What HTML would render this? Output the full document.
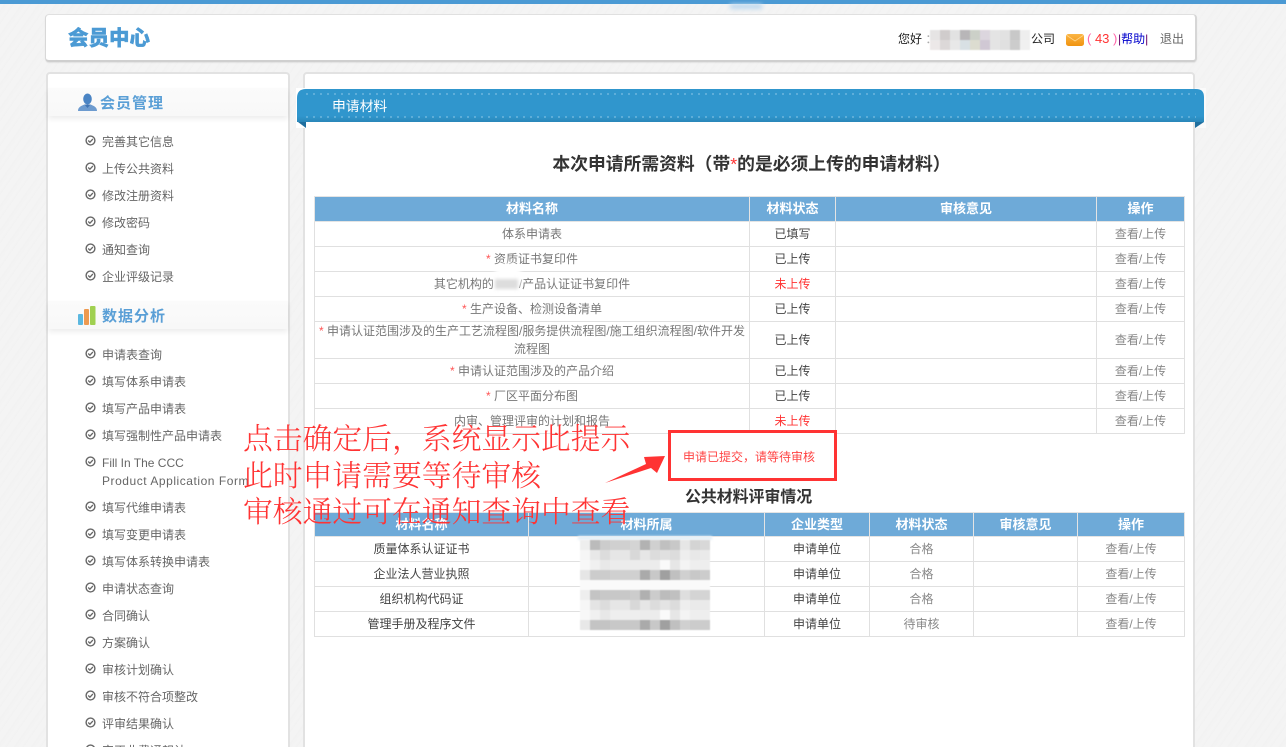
<!DOCTYPE html>
<html lang="zh-CN">
<head>
<meta charset="utf-8">
<title>会员中心</title>
<style>
html,body{margin:0;padding:0;width:1286px;height:747px;overflow:hidden}
body{position:relative;font:12px/18px "Liberation Sans","Noto Sans CJK SC",sans-serif;color:#666;
background:#f3f3f3 repeating-linear-gradient(125deg,#f4f4f4 0,#f4f4f4 5px,#f2f2f2 6px,#f4f4f4 11px,#f2f2f2 14px)}
div,span,svg,table{box-sizing:border-box}
.abs,.i,.ck{position:absolute}
.top{position:absolute;left:0;top:0;width:1286px;height:4px;background:#4b9ad4}
.panel{position:absolute;background:#fff;border:2px solid #e2e2e2;border-radius:4px}
.i{left:102px;white-space:nowrap;color:#666;line-height:18px}
.ck{left:85px;width:11px;height:11px}
.sh{position:absolute;left:48px;width:240px;height:28px;background:linear-gradient(#fbfbfb,#f8f8f8);box-shadow:0 3px 5px rgba(0,0,0,.07)}
.st{position:absolute;font-size:15px;line-height:20px;font-weight:700;color:#5a9fd6;letter-spacing:1px;white-space:nowrap}
table{position:absolute;left:314px;width:870px;border-collapse:collapse;table-layout:fixed;background:#fff}
td,th{border:1px solid #e0e0e0;padding:0;text-align:center;font-size:12px;line-height:18px;color:#777;font-weight:400}
th{background:#6eaad8;color:#fff;font-weight:700;font-size:13px;border-color:#e4e4e4;height:24px}
.t2 th{height:23px}
.t1 td{height:24px}
.s{color:#444}
.o{color:#888}
.r{color:#f33}
.g{color:#888}
.d{color:#444}
b.x{color:#f55;font-weight:400}
.note{position:absolute;left:243px;color:#f33;font-family:"Noto Serif CJK SC","Liberation Serif",serif;font-size:29.8px;line-height:36px;white-space:nowrap;font-weight:300}
</style>
</head>
<body>
<svg width="0" height="0" style="position:absolute"><defs><symbol id="c" viewBox="0 0 11 11"><circle cx="5.5" cy="5.5" r="4.4" fill="none" stroke="#666" stroke-width="1.4"/><path d="M3.2 5.5l1.7 1.700 3-3.200" fill="none" stroke="#666" stroke-width="1.300"/></symbol></defs></svg>
<div class="top"></div>
<div class="abs" style="left:730px;top:4px;width:32px;height:5px;background:#bcd8ee;filter:blur(2px)"></div>

<div class="panel" style="left:45px;top:14px;width:1152px;height:48px;border-width:1px 2px 2px 1px;border-color:#e0e0e0 #d6d6d6 #cfcfcf #d8d8d8;box-shadow:0 1px 1px rgba(0,0,0,.08)"></div>
<div class="abs" style="left:68px;top:25px;font-size:20.5px;line-height:28px;font-weight:900;color:#4b9ad4;white-space:nowrap;-webkit-text-stroke:.4px #4b9ad4">会员中心</div>

<div class="abs" style="left:898px;top:30px;color:#222;white-space:nowrap">您好 <span style="color:#aaa">：</span></div>
<svg class="abs" style="left:930px;top:30px;filter:blur(.4px)" width="100" height="20"><g>
<rect x="0" width="10" height="10" fill="#e6e4e4"/><rect x="10" width="10" height="10" fill="#d0cccc"/><rect x="20" width="10" height="10" fill="#e2e2e2"/><rect x="30" width="10" height="10" fill="#b8b6b8"/><rect x="40" width="10" height="10" fill="#ccd0c8"/><rect x="50" width="10" height="10" fill="#dcd6de"/><rect x="60" width="10" height="10" fill="#e4e4e4"/><rect x="70" width="10" height="10" fill="#e2e2e2"/><rect x="80" width="10" height="10" fill="#c8c8c8"/><rect x="90" width="10" height="10" fill="#eeeeee"/>
<rect x="0" y="10" width="10" height="10" fill="#ece8e8"/><rect x="10" y="10" width="10" height="10" fill="#dcd8d8"/><rect x="20" y="10" width="10" height="10" fill="#e8e8e8"/><rect x="30" y="10" width="10" height="10" fill="#d8e0e4"/><rect x="40" y="10" width="10" height="10" fill="#dcdcd0"/><rect x="50" y="10" width="10" height="10" fill="#d0c8d4"/><rect x="60" y="10" width="10" height="10" fill="#e4e4e4"/><rect x="70" y="10" width="10" height="10" fill="#e0e0e0"/><rect x="80" y="10" width="10" height="10" fill="#cccccc"/><rect x="90" y="10" width="10" height="10" fill="#f0f0f0"/>
</g></svg>
<div class="abs" style="left:1031px;top:30px;color:#222;white-space:nowrap">公司</div>
<svg class="abs" style="left:1066px;top:34px" width="18" height="12" viewBox="0 0 18 12"><defs><linearGradient id="m" x1="0" y1="0" x2="0" y2="1"><stop offset="0" stop-color="#fbb545"/><stop offset="1" stop-color="#f0930f"/></linearGradient></defs><rect width="18" height="12" rx="2.500" fill="url(#m)"/><path d="M1 1.500l8 5.500 8-5.500" fill="none" stroke="#ffd58a" stroke-width=".8"/></svg>
<div class="abs" style="left:1087px;top:30px;color:#f33;white-space:nowrap;font-size:13px"><span style="color:#f6a">(</span> 43 <span style="color:#f6a">)</span></div>
<div class="abs" style="left:1118px;top:30px;color:#00c;white-space:nowrap"><span style="color:#606">|</span>帮助<span style="color:#606">|</span></div>
<div class="abs" style="left:1160px;top:30px;color:#666;white-space:nowrap">退出</div>

<div class="panel" style="left:46px;top:72px;width:244px;height:700px"></div>
<div class="panel" style="left:303px;top:72px;width:892px;height:700px"></div>

<div class="sh" style="top:88px"></div>
<svg class="abs" style="left:78px;top:93px" width="19" height="18" viewBox="0 0 19 18"><ellipse cx="9.500" cy="6" rx="4.300" ry="5.500" fill="#4a84c4"/><path d="M0 18c0-4 3-5 6.500-6.500h6C16 13 19 14 19 18z" fill="#6d9bcf"/><path d="M6.500 11.500L9.500 15l3-3.500z" fill="#3f74b4"/></svg>
<div class="st" style="left:100px;top:94px">会员管理</div>

<svg class="ck" style="top:135px"><use href="#c"/></svg><div class="i" style="top:133px">完善其它信息</div>
<svg class="ck" style="top:162px"><use href="#c"/></svg><div class="i" style="top:160px">上传公共资料</div>
<svg class="ck" style="top:189px"><use href="#c"/></svg><div class="i" style="top:187px">修改注册资料</div>
<svg class="ck" style="top:216px"><use href="#c"/></svg><div class="i" style="top:214px">修改密码</div>
<svg class="ck" style="top:243px"><use href="#c"/></svg><div class="i" style="top:241px">通知查询</div>
<svg class="ck" style="top:270px"><use href="#c"/></svg><div class="i" style="top:268px">企业评级记录</div>

<div class="sh" style="top:301px"></div>
<svg class="abs" style="left:78px;top:306px" width="18" height="19" viewBox="0 0 18 19"><rect x="0" y="8" width="5" height="11" rx="1" fill="#5cb8e0"/><rect x="6" y="3" width="5" height="16" rx="1" fill="#ee9a50"/><rect x="12" y="0" width="5.500" height="19" rx="1" fill="#a0d050"/></svg>
<div class="st" style="left:102px;top:307px">数据分析</div>

<svg class="ck" style="top:348px"><use href="#c"/></svg><div class="i" style="top:346px">申请表查询</div>
<svg class="ck" style="top:375px"><use href="#c"/></svg><div class="i" style="top:373px">填写体系申请表</div>
<svg class="ck" style="top:402px"><use href="#c"/></svg><div class="i" style="top:400px">填写产品申请表</div>
<svg class="ck" style="top:429px"><use href="#c"/></svg><div class="i" style="top:427px">填写强制性产品申请表</div>
<svg class="ck" style="top:456px"><use href="#c"/></svg><div class="i" style="top:454px">Fill In The CCC<br><span style="letter-spacing:.54px">Product Application Form</span></div>
<svg class="ck" style="top:501px"><use href="#c"/></svg><div class="i" style="top:499px">填写代维申请表</div>
<svg class="ck" style="top:528px"><use href="#c"/></svg><div class="i" style="top:526px">填写变更申请表</div>
<svg class="ck" style="top:555px"><use href="#c"/></svg><div class="i" style="top:553px">填写体系转换申请表</div>
<svg class="ck" style="top:582px"><use href="#c"/></svg><div class="i" style="top:580px">申请状态查询</div>
<svg class="ck" style="top:609px"><use href="#c"/></svg><div class="i" style="top:607px">合同确认</div>
<svg class="ck" style="top:636px"><use href="#c"/></svg><div class="i" style="top:634px">方案确认</div>
<svg class="ck" style="top:663px"><use href="#c"/></svg><div class="i" style="top:661px">审核计划确认</div>
<svg class="ck" style="top:690px"><use href="#c"/></svg><div class="i" style="top:688px">审核不符合项整改</div>
<svg class="ck" style="top:717px"><use href="#c"/></svg><div class="i" style="top:715px">评审结果确认</div>
<svg class="ck" style="top:744px"><use href="#c"/></svg><div class="i" style="top:742px">审正业费通報认</div>

<div class="abs" style="left:296px;top:88px;width:9px;height:40px;background:#fff"></div>
<div class="abs" style="left:1195px;top:88px;width:11px;height:40px;background:#fafafa"></div>
<svg class="abs" style="left:297px;top:88px" width="908" height="41" viewBox="0 0 908 41">
<defs><linearGradient id="rb" x1="0" y1="0" x2="0" y2="1"><stop offset="0" stop-color="#3096cd"/><stop offset=".82" stop-color="#3096cd"/><stop offset="1" stop-color="#2a86b8"/></linearGradient></defs>
<path d="M1 34h8v6z" fill="#1f6f9f"/><path d="M907 34h-9v6z" fill="#1f6f9f"/>
<path d="M9 1H899q8 0 8 8V34H0V10q0-9 9-9z" fill="url(#rb)"/>
<path d="M9 6H899M9 29H899" stroke="#8cc6e6" stroke-width="1" stroke-dasharray="2 5" fill="none"/>
</svg>
<div class="abs" style="left:332px;top:98px;font-size:13.800px;line-height:18px;color:#fff;white-space:nowrap">申请材料</div>

<div class="abs" style="left:307px;top:152px;width:889px;text-align:center;font-size:17.800px;line-height:24px;font-weight:700;color:#333;white-space:nowrap">本次申请所需资料（带<span style="color:#f33;font-weight:400">*</span>的是必须上传的申请材料）</div>

<table class="t1" style="top:196px">
<colgroup><col style="width:435px"><col style="width:86px"><col style="width:261px"><col style="width:88px"></colgroup>
<tr><th>材料名称</th><th>材料状态</th><th>审核意见</th><th>操作</th></tr>
<tr><td>体系申请表</td><td class="s">已填写</td><td></td><td class="o">查看/上传</td></tr>
<tr><td><b class="x">*</b> 资质证书复印件</td><td class="s">已上传</td><td></td><td class="o">查看/上传</td></tr>
<tr><td>其它机构的<span style="display:inline-block;width:25px;height:12px"></span>/产品认证证书复印件</td><td class="r">未上传</td><td></td><td class="o">查看/上传</td></tr>
<tr><td><b class="x">*</b> 生产设备、检测设备清单</td><td class="s">已上传</td><td></td><td class="o">查看/上传</td></tr>
<tr><td style="height:36px"><b class="x">*</b> 申请认证范围涉及的生产工艺流程图/服务提供流程图/施工组织流程图/软件开发流程图</td><td class="s">已上传</td><td></td><td class="o">查看/上传</td></tr>
<tr><td><b class="x">*</b> 申请认证范围涉及的产品介绍</td><td class="s">已上传</td><td></td><td class="o">查看/上传</td></tr>
<tr><td><b class="x">*</b> 厂区平面分布图</td><td class="s">已上传</td><td></td><td class="o">查看/上传</td></tr>
<tr><td>内审、管理评审的计划和报告</td><td class="r">未上传</td><td></td><td class="o">查看/上传</td></tr>
</table>
<div class="abs" style="left:494px;top:263px;width:28px;height:28px;border-radius:14px;background:#fff;filter:blur(2px)"></div>
<div class="abs" style="left:495px;top:279px;width:23px;height:10px;background:#ddd;filter:blur(1.500px)"></div>

<div class="abs" style="left:668px;top:430px;width:169px;height:51px;border:3px solid #f33;background:#fff"></div>
<div class="abs" style="left:683px;top:448px;color:#f44;font-size:12px;white-space:nowrap">申请已提交，请等待审核</div>

<div class="abs" style="left:685px;top:487px;font-size:15.900px;line-height:21px;font-weight:700;color:#333;white-space:nowrap">公共材料评审情况</div>

<table class="t1 t2" style="top:512px">
<colgroup><col style="width:214px"><col style="width:236px"><col style="width:105px"><col style="width:104px"><col style="width:104px"><col style="width:107px"></colgroup>
<tr><th>材料名称</th><th>材料所属</th><th>企业类型</th><th>材料状态</th><th>审核意见</th><th>操作</th></tr>
<tr><td class="d">质量体系认证证书</td><td></td><td class="d">申请单位</td><td class="g">合格</td><td></td><td class="o">查看/上传</td></tr>
<tr><td class="d">企业法人营业执照</td><td></td><td class="d">申请单位</td><td class="g">合格</td><td></td><td class="o">查看/上传</td></tr>
<tr><td class="d">组织机构代码证</td><td></td><td class="d">申请单位</td><td class="g">合格</td><td></td><td class="o">查看/上传</td></tr>
<tr><td class="d">管理手册及程序文件</td><td></td><td class="d">申请单位</td><td class="g">待审核</td><td></td><td class="o">查看/上传</td></tr>
</table>

<div class="abs" style="left:578px;top:536px;width:134px;height:4px;background:#e6f0f8;filter:blur(1px)"></div>
<svg class="abs" style="left:580px;top:540px;filter:blur(.4px)" width="130" height="90" viewBox="0 0 130 90" shape-rendering="crispEdges">
<rect x="0" y="0" width="10" height="10" fill="#eee"/><rect x="10" y="0" width="10" height="10" fill="#bbb"/><rect x="20" y="0" width="10" height="10" fill="#ccc"/><rect x="30" y="0" width="10" height="10" fill="#d0d0d0"/><rect x="40" y="0" width="10" height="10" fill="#d0d0d0"/><rect x="50" y="0" width="10" height="10" fill="#d4d4d4"/><rect x="60" y="0" width="10" height="10" fill="#b2b2b2"/><rect x="70" y="0" width="10" height="10" fill="#d0d0d0"/><rect x="80" y="0" width="10" height="10" fill="#c0c0c0"/><rect x="90" y="0" width="10" height="10" fill="#c8c8c8"/><rect x="100" y="0" width="10" height="10" fill="#e6e6e6"/><rect x="110" y="0" width="10" height="10" fill="#d4d4d4"/><rect x="120" y="0" width="10" height="10" fill="#d8d8d8"/>
<rect x="0" y="10" width="10" height="10" fill="#f6f6f6"/><rect x="10" y="10" width="10" height="10" fill="#e8e8e8"/><rect x="20" y="10" width="10" height="10" fill="#dcdcdc"/><rect x="30" y="10" width="10" height="10" fill="#e6e6e6"/><rect x="40" y="10" width="10" height="10" fill="#e6e6e6"/><rect x="50" y="10" width="10" height="10" fill="#d8d8d8"/><rect x="60" y="10" width="10" height="10" fill="#e6e6e6"/><rect x="70" y="10" width="10" height="10" fill="#dcdcdc"/><rect x="80" y="10" width="10" height="10" fill="#e0e0e0"/><rect x="90" y="10" width="10" height="10" fill="#dcdcdc"/><rect x="100" y="10" width="10" height="10" fill="#eee"/><rect x="110" y="10" width="10" height="10" fill="#e8e8e8"/><rect x="120" y="10" width="10" height="10" fill="#eaeaea"/>
<rect x="0" y="20" width="10" height="10" fill="#f8f8f8"/><rect x="10" y="20" width="10" height="10" fill="#f0f0f0"/><rect x="20" y="20" width="10" height="10" fill="#e8e8e8"/><rect x="30" y="20" width="50" height="10" fill="#ececec"/><rect x="80" y="20" width="10" height="10" fill="#fafafa"/><rect x="90" y="20" width="10" height="10" fill="#e6e6e6"/><rect x="100" y="20" width="10" height="10" fill="#f4f4f4"/><rect x="110" y="20" width="20" height="10" fill="#eee"/>
<rect x="0" y="30" width="10" height="10" fill="#e6e6e6"/><rect x="10" y="30" width="20" height="10" fill="#ccc"/><rect x="30" y="30" width="30" height="10" fill="#d0d0d0"/><rect x="60" y="30" width="10" height="10" fill="#aaa"/><rect x="70" y="30" width="10" height="10" fill="#c8c8c8"/><rect x="80" y="30" width="10" height="10" fill="#a0a0a0"/><rect x="90" y="30" width="10" height="10" fill="#c0c0c0"/><rect x="100" y="30" width="10" height="10" fill="#d0d0d0"/><rect x="110" y="30" width="10" height="10" fill="#c8c8c8"/><rect x="120" y="30" width="10" height="10" fill="#ccc"/>
<rect x="0" y="40" width="130" height="10" fill="#fafafa"/>
<rect x="0" y="50" width="10" height="10" fill="#eee"/><rect x="10" y="50" width="10" height="10" fill="#c4c4c4"/><rect x="20" y="50" width="30" height="10" fill="#c8c8c8"/><rect x="50" y="50" width="10" height="10" fill="#ccc"/><rect x="60" y="50" width="10" height="10" fill="#b0b0b0"/><rect x="70" y="50" width="10" height="10" fill="#ccc"/><rect x="80" y="50" width="10" height="10" fill="#bcbcbc"/><rect x="90" y="50" width="10" height="10" fill="#c0c0c0"/><rect x="100" y="50" width="10" height="10" fill="#dedede"/><rect x="110" y="50" width="20" height="10" fill="#d4d4d4"/>
<rect x="0" y="60" width="10" height="10" fill="#f6f6f6"/><rect x="10" y="60" width="10" height="10" fill="#e4e4e4"/><rect x="20" y="60" width="10" height="10" fill="#dcdcdc"/><rect x="30" y="60" width="20" height="10" fill="#e6e6e6"/><rect x="50" y="60" width="10" height="10" fill="#d8d8d8"/><rect x="60" y="60" width="10" height="10" fill="#e6e6e6"/><rect x="70" y="60" width="10" height="10" fill="#dcdcdc"/><rect x="80" y="60" width="10" height="10" fill="#e4e4e4"/><rect x="90" y="60" width="10" height="10" fill="#dcdcdc"/><rect x="100" y="60" width="10" height="10" fill="#eee"/><rect x="110" y="60" width="20" height="10" fill="#eaeaea"/>
<rect x="0" y="70" width="10" height="10" fill="#f8f8f8"/><rect x="10" y="70" width="10" height="10" fill="#f0f0f0"/><rect x="20" y="70" width="10" height="10" fill="#e8e8e8"/><rect x="30" y="70" width="30" height="10" fill="#eee"/><rect x="60" y="70" width="20" height="10" fill="#ececec"/><rect x="80" y="70" width="10" height="10" fill="#fafafa"/><rect x="90" y="70" width="10" height="10" fill="#e6e6e6"/><rect x="100" y="70" width="10" height="10" fill="#f4f4f4"/><rect x="110" y="70" width="20" height="10" fill="#eee"/>
<rect x="0" y="80" width="10" height="10" fill="#e8e8e8"/><rect x="10" y="80" width="20" height="10" fill="#c4c4c4"/><rect x="30" y="80" width="30" height="10" fill="#c8c8c8"/><rect x="60" y="80" width="10" height="10" fill="#aaa"/><rect x="70" y="80" width="10" height="10" fill="#c8c8c8"/><rect x="80" y="80" width="10" height="10" fill="#a0a0a0"/><rect x="90" y="80" width="10" height="10" fill="#c0c0c0"/><rect x="100" y="80" width="10" height="10" fill="#d0d0d0"/><rect x="110" y="80" width="20" height="10" fill="#ccc"/>
</svg>

<svg class="abs" style="left:600px;top:450px" width="70" height="40" viewBox="600 450 70 40"><polygon points="605,483 646,464 644,457 665,456 657,473 651,468" fill="#f33"/></svg>

<div class="note" style="top:419px">点击确定后，系统显示此提示</div>
<div class="note" style="top:456px">此时申请需要等待审核</div>
<div class="note" style="top:492px">审核通过可在通知查询中查看</div>
</body>
</html>
